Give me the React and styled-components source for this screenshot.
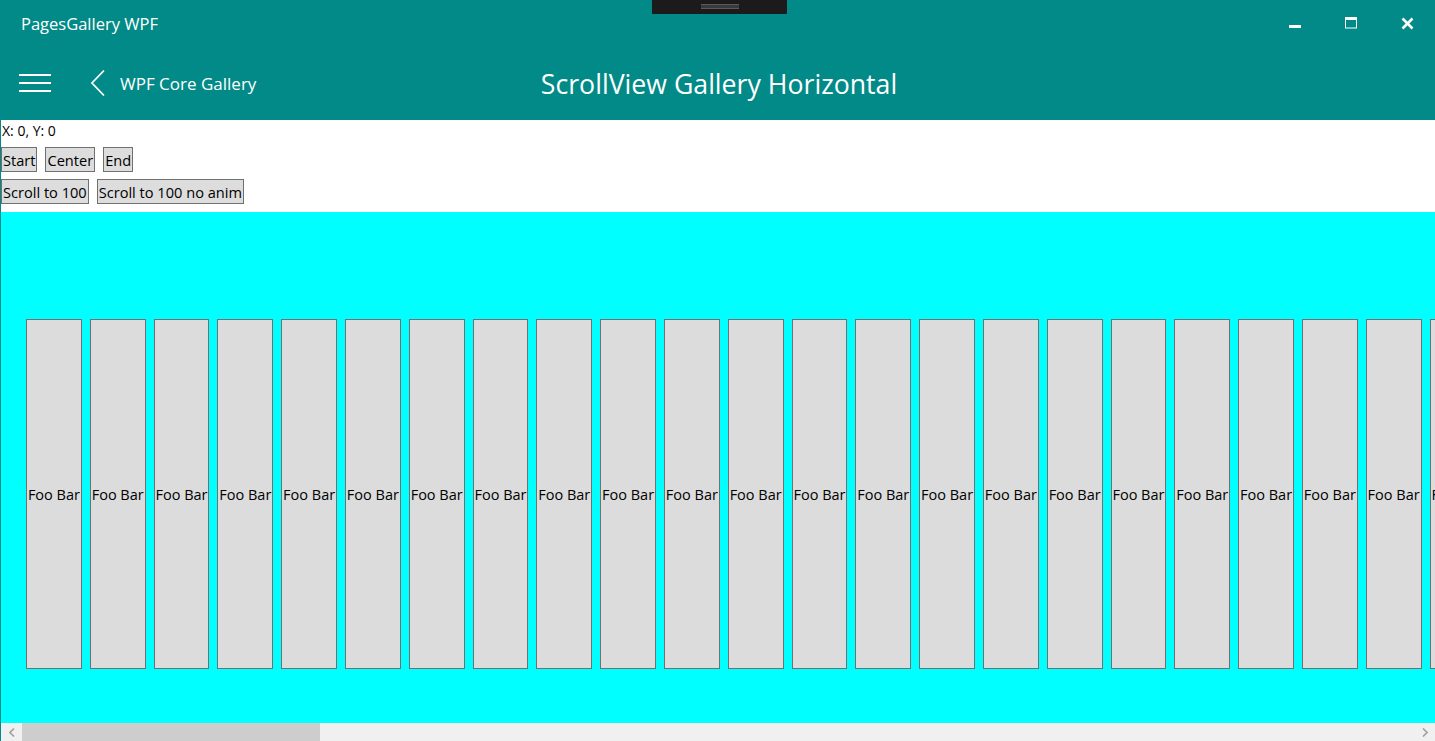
import React from "react";
import styled, { createGlobalStyle } from "styled-components";

const GlobalStyle = createGlobalStyle`
  html, body {
    margin: 0;
    padding: 0;
    overflow: hidden;
  }
  body {
    font-family: "Segoe UI", "Open Sans", "Noto Sans", sans-serif;
  }
`;

const TEAL = "#018a87";

const Window = styled.div`
  position: relative;
  width: 1435px;
  height: 741px;
  display: flex;
  flex-direction: column;
  background: ${TEAL};
  padding-left: 1px;
  box-sizing: border-box;
  overflow: hidden;
`;

const TitleBar = styled.div`
  height: 50px;
  display: flex;
  align-items: center;
  padding-left: 20px;
  color: #fff;
  font-size: 16.5px;
`;

const TitleText = styled.div`
  flex: 1;
  margin-top: -3px;
`;

const WinButtons = styled.div`
  display: flex;
  align-items: center;
  height: 100%;
`;

const WinButton = styled.div`
  width: 56px;
  height: 100%;
  display: flex;
  align-items: center;
  justify-content: center;
  margin-top: -4px;
`;

const Grabber = styled.div`
  position: absolute;
  left: 652px;
  top: 0;
  width: 135px;
  height: 14px;
  background: #1b1b1b;
  display: flex;
  align-items: center;
  justify-content: center;

  &::after {
    content: "";
    width: 38px;
    height: 3px;
    margin-top: -2px;
    border-top: 1px solid #5a5a5a;
    border-bottom: 1px solid #5a5a5a;
    background: #3a3a3a;
  }
`;

const Header = styled.div`
  height: 70px;
  display: grid;
  grid-template-columns: 1fr auto 1fr;
  align-items: center;
  color: #fff;
`;

const HeaderLeft = styled.div`
  display: flex;
  align-items: center;
  padding-left: 18px;
  margin-top: -4px;
`;

const Hamburger = styled.div`
  width: 32px;
  height: 18px;
  display: flex;
  flex-direction: column;
  justify-content: space-between;

  span {
    display: block;
    height: 2px;
    background: #fff;
  }
`;

const BackLink = styled.div`
  display: flex;
  align-items: center;
  margin-left: 39px;
  font-size: 17px;
  gap: 14px;
`;

const PageTitle = styled.div`
  font-size: 26.7px;
  margin-top: -4px;
  padding-left: 2px;
`;

const Content = styled.div`
  flex: 1;
  display: flex;
  flex-direction: column;
  background: #fff;
  min-height: 0;
`;

const Controls = styled.div`
  height: 92px;
  display: flex;
  flex-direction: column;
  font-size: 14px;
  color: #000;
`;

const Coords = styled.div`
  height: 22px;
  line-height: 22px;
  padding-left: 1px;
`;

const ButtonRow = styled.div`
  display: flex;
  gap: 8px;
  margin-top: ${(p) => p.$top || 0}px;
`;

const WpfButton = styled.button`
  height: 25px;
  padding: 0 1px;
  margin: 0;
  font-family: inherit;
  font-size: 14.6px;
  color: #000;
  background: #dddddd;
  border: 1px solid #707070;
  border-radius: 0;
  line-height: 22px;
`;

const Scroller = styled.div`
  flex: 1;
  background: #00ffff;
  overflow: hidden;
  display: flex;
  align-items: flex-start;
  padding-top: 107px;
  padding-left: 25px;
`;

const Card = styled.div`
  flex: 0 0 auto;
  width: 55.8px;
  height: 350px;
  margin-right: 8px;
  box-sizing: border-box;
  background: #dcdcdc;
  border: 1px solid #707070;
  display: flex;
  align-items: center;
  justify-content: center;
  font-size: 14.5px;
  color: #000;
  white-space: nowrap;
  overflow: hidden;
`;

const ScrollBar = styled.div`
  height: 18px;
  display: flex;
  background: #f0f0f0;
`;

const ArrowButton = styled.div`
  width: 21px;
  display: flex;
  align-items: center;
  justify-content: center;
`;

const Track = styled.div`
  flex: 1;
  display: flex;
`;

const Thumb = styled.div`
  width: 298px;
  background: #cdcdcd;
`;

const cards = Array.from({ length: 23 });

export default function App() {
  return (
    <>
      <GlobalStyle />
      <Window>
        <Grabber />
        <TitleBar>
          <TitleText>PagesGallery WPF</TitleText>
          <WinButtons>
            <WinButton>
              <svg width="12" height="12" viewBox="0 0 12 12">
                <rect x="0" y="8" width="12" height="3" fill="#fff" />
              </svg>
            </WinButton>
            <WinButton>
              <svg width="12" height="12" viewBox="0 0 12 12">
                <rect x="0.5" y="0.5" width="11" height="10.5" fill="none" stroke="#fff" />
                <rect x="0" y="0" width="12" height="3" fill="#fff" />
              </svg>
            </WinButton>
            <WinButton>
              <svg width="13" height="13" viewBox="0 0 13 13">
                <path d="M1.5 1.5 L11.5 11.5 M11.5 1.5 L1.5 11.5" stroke="#fff" strokeWidth="2.6" />
              </svg>
            </WinButton>
          </WinButtons>
        </TitleBar>
        <Header>
          <HeaderLeft>
            <Hamburger>
              <span />
              <span />
              <span />
            </Hamburger>
            <BackLink>
              <svg width="16" height="28" viewBox="0 0 16 28">
                <path d="M14 1.5 L2 14 L14 26.5" fill="none" stroke="#fff" strokeWidth="1.8" />
              </svg>
              WPF Core Gallery
            </BackLink>
          </HeaderLeft>
          <PageTitle>ScrollView Gallery Horizontal</PageTitle>
          <div />
        </Header>
        <Content>
          <Controls>
            <Coords>X: 0, Y: 0</Coords>
            <ButtonRow $top={5}>
              <WpfButton>Start</WpfButton>
              <WpfButton>Center</WpfButton>
              <WpfButton>End</WpfButton>
            </ButtonRow>
            <ButtonRow $top={7}>
              <WpfButton>Scroll to 100</WpfButton>
              <WpfButton>Scroll to 100 no anim</WpfButton>
            </ButtonRow>
          </Controls>
          <Scroller>
            {cards.map((_, i) => (
              <Card key={i}>Foo Bar</Card>
            ))}
          </Scroller>
          <ScrollBar>
            <ArrowButton>
              <svg width="6" height="9" viewBox="0 0 6 9">
                <path d="M5 0.5 L1 4.5 L5 8.5" fill="none" stroke="#a0a0a0" strokeWidth="1.6" />
              </svg>
            </ArrowButton>
            <Track>
              <Thumb />
            </Track>
            <ArrowButton>
              <svg width="6" height="9" viewBox="0 0 6 9">
                <path d="M1 0.5 L5 4.5 L1 8.5" fill="none" stroke="#a0a0a0" strokeWidth="1.6" />
              </svg>
            </ArrowButton>
          </ScrollBar>
        </Content>
      </Window>
    </>
  );
}
